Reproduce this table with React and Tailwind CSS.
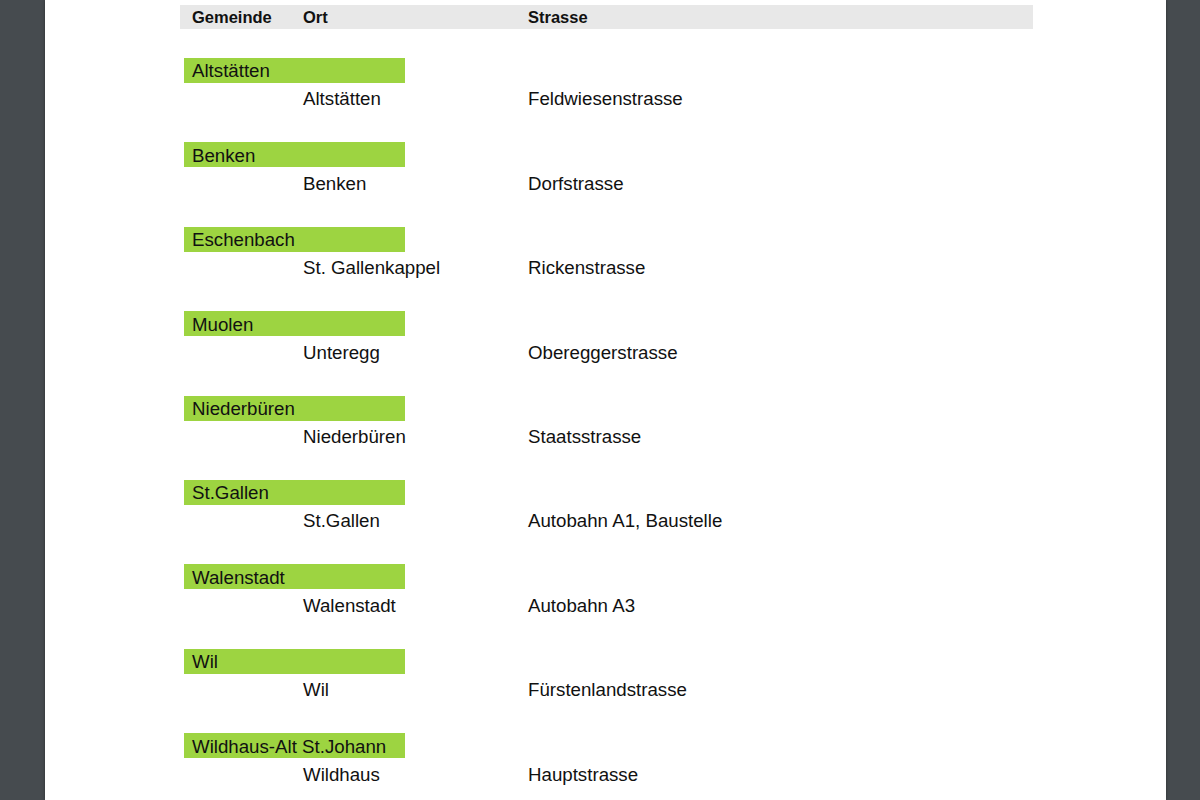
const ROWS = [
  { gemeinde: 'Altstätten', ort: 'Altstätten', strasse: 'Feldwiesenstrasse' },
  { gemeinde: 'Benken', ort: 'Benken', strasse: 'Dorfstrasse' },
  { gemeinde: 'Eschenbach', ort: 'St. Gallenkappel', strasse: 'Rickenstrasse' },
  { gemeinde: 'Muolen', ort: 'Unteregg', strasse: 'Obereggerstrasse' },
  { gemeinde: 'Niederbüren', ort: 'Niederbüren', strasse: 'Staatsstrasse' },
  { gemeinde: 'St.Gallen', ort: 'St.Gallen', strasse: 'Autobahn A1, Baustelle' },
  { gemeinde: 'Walenstadt', ort: 'Walenstadt', strasse: 'Autobahn A3' },
  { gemeinde: 'Wil', ort: 'Wil', strasse: 'Fürstenlandstrasse' },
  { gemeinde: 'Wildhaus-Alt St.Johann', ort: 'Wildhaus', strasse: 'Hauptstrasse' },
]

export default function App() {
  return (
    <div className="h-[800px] w-[1200px] overflow-hidden bg-[#464b4f] font-['Liberation_Sans',Arial,sans-serif] text-[#111]">
      <div className="ml-[45px] h-[800px] w-[1121px] overflow-hidden bg-white shadow-[0_0_3px_rgba(0,0,0,0.4)]">
        <div className="pl-[135px] pt-[5px]">
          {/* table header */}
          <div className="flex h-[24px] w-[853px] items-center bg-[#e8e8e8] pt-[1px] text-[16.5px] font-bold">
            <div className="w-[123px] pl-[12px]">Gemeinde</div>
            <div className="w-[225px]">Ort</div>
            <div>Strasse</div>
          </div>

          {/* groups */}
          <div className="mt-[29px] text-[18.7px]">
            {ROWS.map((r) => (
              <div key={r.gemeinde} className="mb-[26.4px]">
                <div className="ml-[4px] flex h-[25px] w-[221px] items-center whitespace-nowrap bg-[#9dd441] pl-[8px] pt-[2px]">
                  {r.gemeinde}
                </div>
                <div className="flex h-[33px] items-center whitespace-nowrap">
                  <div className="w-[348px] pl-[123px]">{r.ort}</div>
                  <div>{r.strasse}</div>
                </div>
              </div>
            ))}
          </div>
        </div>
      </div>
    </div>
  )
}
